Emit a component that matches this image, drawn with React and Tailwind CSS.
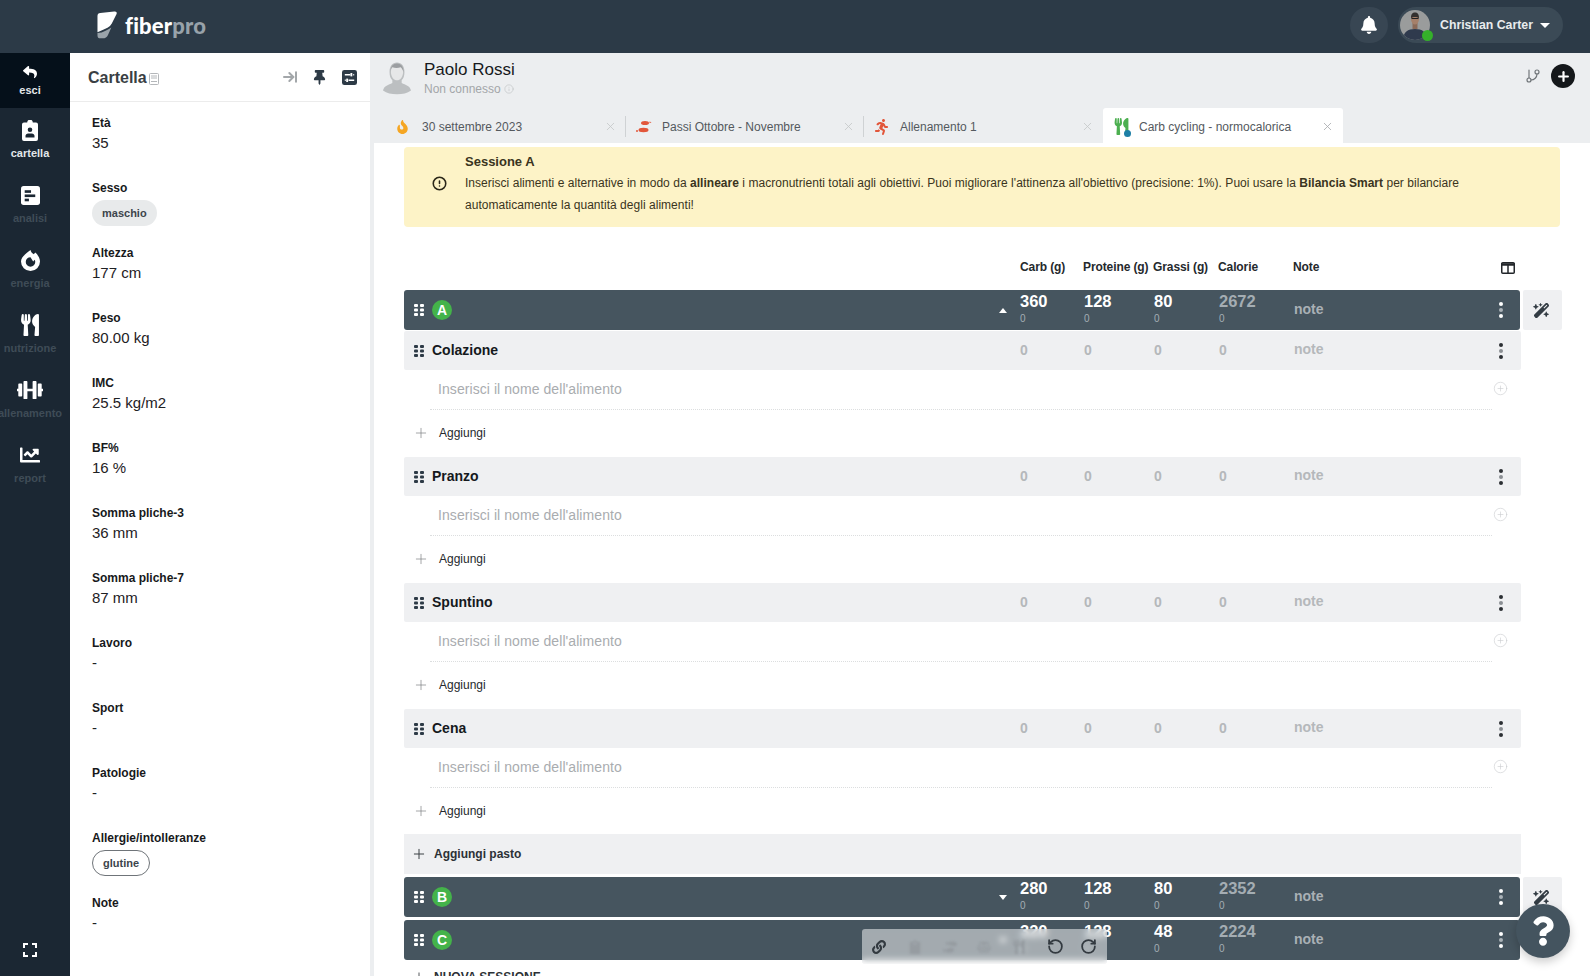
import React from 'react';
import { ArrowRightToLine, GitBranch, Info, Plus, RotateCcw, RotateCw, X, AlertCircle, PlusCircle } from 'lucide-react';
import { FaReply, FaUtensils, FaDumbbell, FaChartLine, FaThumbtack, FaBell, FaLink, FaQuestion, FaRunning, FaFire, FaShoePrints, FaClipboard, FaBalanceScale } from 'react-icons/fa';
import { FaWandMagicSparkles } from 'react-icons/fa6';

const fields = [
  ['Età', '35'],
  ['Sesso', null, 'maschio'],
  ['Altezza', '177 cm'],
  ['Peso', '80.00 kg'],
  ['IMC', '25.5 kg/m2'],
  ['BF%', '16 %'],
  ['Somma pliche-3', '36 mm'],
  ['Somma pliche-7', '87 mm'],
  ['Lavoro', '-'],
  ['Sport', '-'],
  ['Patologie', '-'],
  ['Allergie/intolleranze', null, 'glutine'],
  ['Note', '-'],
];

function Grip({ className }) {
  return (
    <svg viewBox="0 0 10 12" className={className} fill="currentColor">
      <rect x="0" y="0" width="4" height="3" rx="1" /><rect x="6" y="0" width="4" height="3" rx="1" />
      <rect x="0" y="4.5" width="4" height="3" rx="1" /><rect x="6" y="4.5" width="4" height="3" rx="1" />
      <rect x="0" y="9" width="4" height="3" rx="1" /><rect x="6" y="9" width="4" height="3" rx="1" />
    </svg>
  );
}

function Kebab({ dark }) {
  return (
    <div className={`flex flex-col items-center gap-[2px] ${dark ? 'text-white' : 'text-[#2b2f33]'}`}>
      <span className="w-[4px] h-[4px] rounded-full bg-current" />
      <span className={`w-[4px] h-[4px] rounded-full ${dark ? 'bg-[#aab2b8]' : 'bg-[#8b8f94]'}`} />
      <span className="w-[4px] h-[4px] rounded-full bg-current" />
    </div>
  );
}

function Logo() {
  return (
    <svg viewBox="0 0 22 29" className="w-[21px] h-[28px]">
      <path d="M0.500 5 Q0.500 2 3.500 1.800 L18 0.300 Q21.500 0 20.500 3 L15.500 13 Q14 16 11 17.500 Q6 20 0.500 22 Z" fill="#fff" />
      <path d="M0.500 23 Q5 23 9 20.500 Q13 18.500 15 17 L11.500 25 Q10 28.500 6 28.500 L3.500 28.500 Q0.500 28.500 0.500 25.500 Z" fill="#9aa3aa" />
    </svg>
  );
}

function ClipboardUser() {
  return (
    <svg viewBox="0 0 16 21" className="w-[16px] h-[21px]">
      <path fillRule="evenodd" fill="#fff" d="M2 2.5h3.2a2.8 2.8 0 0 1 5.6 0H14a2 2 0 0 1 2 2V19a2 2 0 0 1-2 2H2a2 2 0 0 1-2-2V4.500a2 2 0 0 1 2-2Z M8 7.500a2.300 2.300 0 1 0 0 4.600a2.300 2.300 0 0 0 0-4.600Z M3.500 17.500h9v-1.800c0-1.300-1.200-2.300-2.600-2.300H6.100c-1.400 0-2.600 1-2.600 2.300Z" />
    </svg>
  );
}

function BarsSquare() {
  return (
    <svg viewBox="0 0 18 18" className="w-[19px] h-[19px]">
      <rect width="18" height="18" rx="2.500" fill="#fff" />
      <rect x="3.500" y="4" width="6" height="2.500" fill="#1b2733" />
      <rect x="3.500" y="8" width="10" height="2.500" fill="#1b2733" />
      <rect x="3.500" y="12" width="4" height="2.500" fill="#1b2733" />
    </svg>
  );
}

function FlameRing() {
  return (
    <svg viewBox="0 0 20 22" className="w-[19px] h-[21px]">
      <path fillRule="evenodd" fill="#fff" d="M10 0c.5 2.500 2 3.500 3.500 4.500l1.500-1.800C17.800 5 20 8.500 20 12a10 10 0 0 1-20 0C0 7.500 4.500 4.500 10 0Z M10 7.500a5 5 0 1 0 5 5c0-.8-.2-1.600-.6-2.300L12.800 12 10 7.500Z" />
    </svg>
  );
}

function SlidersSquare() {
  return (
    <svg viewBox="0 0 16 16" className="w-[15px] h-[15px]">
      <rect width="16" height="16" rx="2.500" fill="#2d3a46" />
      <path d="M3 5h6M12 5h1M3 11h1M7 11h6" stroke="#fff" strokeWidth="1.500" />
      <rect x="9" y="3.200" width="2" height="3.600" fill="#fff" />
      <rect x="4.500" y="9.200" width="2" height="3.600" fill="#fff" />
    </svg>
  );
}

function Footprints() {
  return (
    <svg viewBox="0 0 16 14" className="w-[16px] h-[14px]" fill="#e2563a">
      <ellipse cx="9" cy="3" rx="4" ry="2" />
      <path d="M13.500 1.500l2 .8-2 .9z" />
      <ellipse cx="7.500" cy="10" rx="5" ry="2.200" />
      <circle cx="1" cy="11" r="1" />
    </svg>
  );
}

function Portrait() {
  return (
    <svg viewBox="0 0 30 30" className="w-[30px] h-[30px] rounded-full">
      <rect width="30" height="30" fill="#9a9c9c" />
      <path d="M3 30c0-8 5-11 12-11s12 3 12 11Z" fill="#2f3a4d" />
      <rect x="12.500" y="13" width="5" height="6" fill="#8a6a58" />
      <ellipse cx="15" cy="9" rx="4" ry="5.500" fill="#a5806a" />
      <path d="M11 8c0-4 1.500-5.500 4-5.500s4 1.500 4 5.500c-2-1.500-6-1.500-8 0Z" fill="#33302e" />
      <rect x="11.500" y="8" width="7" height="1" fill="#222" />
    </svg>
  );
}

function Client() {
  return (
    <svg viewBox="0 0 30 36" className="w-[28px] h-[35px]">
      <path d="M0 32c1-5 6-6 10-8v-3c-2-2-3-5-3-9 0-6 3-10 8-10s8 4 8 10c0 4-1 7-3 9v3c4 2 9 3 10 8-4 3-9 4-15 4s-11-1-15-4Z" fill="#bcbfc1" />
      <path d="M8.500 12c0-5 2.500-8 6.500-8s6.500 3 6.500 8c0 5-3 9-6.500 9s-6.500-4-6.500-9Z" fill="#e6e7e8" />
      <path d="M8 12c0-6 3-9 7-9s7 3 7 9c-1-3-2-4-3-5-3 1-6 1-9 0-1 1-2 2-2 5Z" fill="#9b9ea1" />
    </svg>
  );
}

function NavItem({ icon, label, height, bright, dark, pad, gap }) {
  return (
    <div className={`w-[70px] pr-[10px] ${height} ${pad} flex flex-col items-center ${dark ? 'bg-[#05101a]' : ''}`}>
      <div className="h-[24px] flex items-center justify-center text-white shrink-0">{icon}</div>
      <span className={`${gap} text-[11px] leading-[14px] font-bold whitespace-nowrap ${bright ? 'text-[#e3e7ea]' : 'text-[#3f4c57]'}`}>{label}</span>
    </div>
  );
}

function Tab({ icon, label, active, divider, w }) {
  return (
    <div className={`relative h-[35px] shrink-0 flex items-center pt-[2px] ${w} ${active ? 'bg-white rounded-t-[3px]' : ''}`}>
      <div className="w-[36px] flex justify-center shrink-0">{icon}</div>
      <span className="text-[12px] text-[#54595e] whitespace-nowrap">{label}</span>
      <X className={`absolute right-[9px] top-[12px] w-[13px] h-[13px] ${active ? 'text-[#a6a9ac]' : 'text-[#c4c7c9]'}`} strokeWidth={1.500} />
      {divider && <span className="absolute right-0 top-[8px] h-[21px] w-px bg-[#cfd2d4]" />}
    </div>
  );
}

function Cols({ values, dark }) {
  const main = dark ? 'text-white' : 'text-[#b5b8bb]';
  const cal = dark ? 'text-[#a4adb3]' : 'text-[#b5b8bb]';
  const widths = ['w-[64px]', 'w-[70px]', 'w-[65px]', 'w-[75px]'];
  return (
    <>
      {values.map((v, i) => (
        <div key={i} className={`${widths[i]} shrink-0 ${dark ? 'pb-[3px]' : 'pb-[2px]'}`}>
          <div className={`${dark ? 'text-[16.500px] leading-[18px]' : 'text-[14px] leading-[18px]'} font-bold ${i === 3 ? cal : main}`}>{v}</div>
          {dark && <div className="text-[10px] leading-[12px] mt-[3px] text-[#a4adb3]">0</div>}
        </div>
      ))}
      <div className="w-[186px] shrink-0 text-[14px] font-bold pb-[2px]">
        <span className={dark ? 'text-[#a9b0b5]' : 'text-[#b5b8bb]'}>note</span>
      </div>
      <div className={`flex justify-center shrink-0 ${dark ? 'w-[40px] pl-[2px]' : 'w-[41px]'}`}><Kebab dark={dark} /></div>
    </>
  );
}

function SessionRow({ letter, values, open, wand }) {
  return (
    <div className="flex items-start">
      <div className="w-[1116px] h-[40px] bg-[#46555f] rounded-[3px] flex items-center shrink-0">
        <Grip className="w-[10px] h-[12px] ml-[10px] text-white" />
        <span className="ml-[8px] w-[20px] h-[20px] rounded-full bg-[#44b34a] text-white text-[14px] font-bold flex items-center justify-center">{letter}</span>
        <div className="flex-1 flex justify-end pr-[13px]">
          <svg viewBox="0 0 8 5" className={`w-[8px] h-[5px] text-white ${open ? '' : 'rotate-180'}`} fill="currentColor"><path d="M4 0l4 5H0z" /></svg>
        </div>
        <Cols values={values} dark />
      </div>
      {wand && (
        <div className="ml-[3px] w-[39px] h-[40px] bg-[#eff0f2] rounded-[2px] flex items-center justify-center text-[#333c44] pr-[2px]">
          <FaWandMagicSparkles className="w-[17px] h-[17px]" />
        </div>
      )}
    </div>
  );
}

function Meal({ name }) {
  return (
    <div className="w-[1117px]">
      <div className="h-[39px] bg-[#eff0f2] rounded-[2px] flex items-center">
        <Grip className="w-[10px] h-[12px] ml-[10px] text-[#2d3a46]" />
        <span className="ml-[8px] flex-1 text-[14px] font-bold text-[#15191d]">{name}</span>
        <Cols values={[0, 0, 0, 0]} />
      </div>
      <div className="h-[40px] ml-[26px] flex items-stretch">
        <div className="flex-1 border-b border-dotted border-[#dcdedf] flex items-center pl-[8px]">
          <span className="text-[14px] tracking-[0.07px] text-[#a9acaf]">Inserisci il nome dell'alimento</span>
        </div>
        <div className="w-[17px] mr-[12px] pb-[3px] flex items-center justify-center">
          <PlusCircle className="w-[15px] h-[15px] text-[#ccced0]" strokeWidth={1} />
        </div>
      </div>
      <div className="h-[47px] flex items-center pb-[2px]">
        <Plus className="w-[16px] h-[16px] ml-[9px] text-[#75797d]" strokeWidth={1} />
        <span className="ml-[10px] text-[12px] text-[#25292d]">Aggiungi</span>
      </div>
    </div>
  );
}

export default function App() {
  return (
    <div className="w-[1596px] h-[976px] overflow-hidden relative bg-white font-['Liberation_Sans',Arial,sans-serif]">
      {/* top bar */}
      <div className="w-[1590px] h-[53px] bg-[#2c3a47] flex items-center pb-[3px]">
        <div className="ml-[97px] flex items-center gap-[7px]">
          <Logo />
          <span className="font-['Lato',sans-serif] font-black text-[22px] tracking-[0.2px] text-white">fiber<span className="text-[#98a2aa]">pro</span></span>
        </div>
        <div className="ml-auto mr-[27px] flex items-center gap-[10px]">
          <div className="w-[38px] h-[36px] rounded-full bg-[#384653] flex items-center justify-center">
            <FaBell className="w-[18px] h-[18px] text-white" />
          </div>
          <div className="relative w-[165px] h-[36px] rounded-full bg-[#3b4a56] flex items-center pl-[2px]">
            <Portrait />
            <span className="absolute left-[24px] top-[23px] w-[11px] h-[11px] rounded-full bg-[#35b02a]" />
            <span className="ml-[10px] text-[12.300px] font-bold text-[#e9ecee] whitespace-nowrap">Christian Carter</span>
            <svg viewBox="0 0 10 5" className="ml-[7px] w-[10px] h-[5px]" fill="#fff"><path d="M0 0h10L5 5z" /></svg>
          </div>
        </div>
      </div>

      <div className="flex h-[923px]">
        {/* icon sidebar */}
        <div className="w-[70px] shrink-0 bg-[#1b2733] flex flex-col overflow-hidden">
          <NavItem dark bright height="h-[55px]" pad="pt-[7px]" gap="-mt-[1px]" label="esci" icon={<FaReply className="w-[14px] h-[14px]" />} />
          <NavItem bright height="h-[65px]" pad="pt-[10px]" gap="mt-[4px]" label="cartella" icon={<ClipboardUser />} />
          <NavItem height="h-[65px]" pad="pt-[10px]" gap="mt-[4px]" label="analisi" icon={<BarsSquare />} />
          <NavItem height="h-[65px]" pad="pt-[10px]" gap="mt-[4px]" label="energia" icon={<FlameRing />} />
          <NavItem height="h-[65px]" pad="pt-[10px]" gap="mt-[4px]" label="nutrizione" icon={<FaUtensils className="w-[20px] h-[22px]" />} />
          <NavItem height="h-[65px]" pad="pt-[10px]" gap="mt-[4px]" label="allenamento" icon={<FaDumbbell className="w-[26px] h-[22px]" />} />
          <NavItem height="h-[65px]" pad="pt-[10px]" gap="mt-[4px]" label="report" icon={<FaChartLine className="w-[22px] h-[20px]" />} />
          <div className="mt-auto mb-[19px] pr-[10px] flex justify-center">
            <svg viewBox="0 0 14 14" className="w-[14px] h-[14px]" fill="none" stroke="#fff" strokeWidth="2"><path d="M1 5V1h4M9 1h4v4M13 9v4H9M5 13H1V9" /></svg>
          </div>
        </div>

        {/* cartella panel */}
        <div className="w-[300px] shrink-0 flex flex-col">
          <div className="h-[49px] border-b border-[#ececec] flex items-center pl-[18px] pr-[13px] shrink-0">
            <span className="text-[16px] font-bold text-[#3a3f44] pt-[2px]">Cartella</span>
            <svg viewBox="0 0 10 12" className="ml-[2px] mt-[4px] w-[10px] h-[12px]" fill="none" stroke="#b4b7ba" strokeWidth="1"><rect x="0.500" y="0.500" width="9" height="11" rx="1" /><path d="M2 3h6M2 5h6M2 8.500h6" /></svg>
            <div className="ml-auto flex items-center">
              <ArrowRightToLine className="w-[16px] h-[16px] text-[#a3a7aa]" strokeWidth={3} />
              <FaThumbtack className="ml-[14px] w-[15px] h-[15px] text-[#2d3a46]" />
              <span className="ml-[15px]"><SlidersSquare /></span>
            </div>
          </div>
          <div className="pt-[12px] pl-[22px]">
            {fields.map(([label, value, chip]) => (
              <div key={label} className="h-[65px]">
                <div className="text-[12px] leading-[18px] font-bold text-[#17191b]">{label}</div>
                {value && <div className="text-[15px] leading-[20px] mt-[1px] text-[#1e2124]">{value}</div>}
                {chip === 'maschio' && <span className="inline-block mt-[3px] h-[26px] px-[10px] leading-[26px] rounded-full bg-[#e8eaeb] text-[11px] font-bold text-[#3d454c]">{chip}</span>}
                {chip === 'glutine' && <span className="inline-block mt-[3px] h-[26px] px-[10px] leading-[24px] rounded-full border border-[#6f7479] text-[11px] font-bold text-[#3d454c]">{chip}</span>}
              </div>
            ))}
          </div>
        </div>

        {/* main */}
        <div className="w-[1220px] shrink-0 flex flex-col">
          <div className="h-[90px] bg-[#eceef0] shrink-0 relative">
            <div className="h-[55px] flex items-start pl-[13px] pt-[7px]">
              <Client />
              <div className="ml-[13px]">
                <div className="text-[17px] leading-[18px] mt-[1px] text-[#16191c]">Paolo Rossi</div>
                <div className="mt-[3px] flex items-center gap-[3px] text-[12px] leading-[14px] text-[#a3a6a9]">
                  Non connesso <Info className="w-[10px] h-[10px] text-[#bfc2c4]" strokeWidth={1.500} />
                </div>
              </div>
              <div className="ml-auto mr-[15px] mt-[4px] flex items-center gap-[10px]">
                <GitBranch className="w-[16px] h-[16px] text-[#6f7478]" strokeWidth={1.750} />
                <span className="w-[24px] h-[24px] rounded-full bg-[#15181b] flex items-center justify-center">
                  <Plus className="w-[15px] h-[15px] text-white" strokeWidth={3.500} />
                </span>
              </div>
            </div>
            <div className="flex pl-[16px]">
              <Tab w="w-[240px]" divider label="30 settembre 2023" icon={<FaFire className="w-[13px] h-[14px] mr-[4px] text-[#f5a623]" />} />
              <Tab w="w-[238px]" divider label="Passi Ottobre - Novembre" icon={<Footprints />} />
              <Tab w="w-[239px]" label="Allenamento 1" icon={<FaRunning className="w-[15px] h-[16px] mr-[2px] text-[#e2563a]" />} />
              <Tab w="w-[240px]" active label="Carb cycling - normocalorica" icon={
                <span className="relative"><FaUtensils className="w-[15px] h-[17px] text-[#4caf50]" /><span className="absolute -right-[2px] -bottom-[2px] w-[7px] h-[7px] rounded-full bg-[#1d7fa6]" /></span>
              } />
            </div>
          </div>

          <div className="flex-1 pl-[34px] border-l-4 border-[#eceef0] relative">
            <div className="mt-[4px] ml-[-4px] w-[1156px] h-[80px] bg-[#fdf3c7] rounded-[4px] flex items-start text-[#3a3420]">
              <div className="w-[61px] pt-[29px] flex justify-center shrink-0 pl-[9px]">
                <AlertCircle className="w-[15px] h-[15px] text-[#2b2718]" strokeWidth={2.500} />
              </div>
              <div className="pt-[7px]">
                <div className="text-[13px] leading-[16px] font-bold">Sessione A</div>
                <p className="mt-[3px] text-[12px] leading-[21.500px] w-[1030px] tracking-[0.035px]">
                  Inserisci alimenti e alternative in modo da <b>allineare</b> i macronutrienti totali agli obiettivi. Puoi migliorare l'attinenza all'obiettivo (precisione: 1%). Puoi usare la <b>Bilancia Smart</b> per bilanciare automaticamente la quantità degli alimenti!
                </p>
              </div>
            </div>

            <div className="ml-[-4px] mt-[31px] h-[32px] w-[1116px] flex items-start text-[12px] font-bold tracking-[-0.1px] text-[#25292d]">
              <div className="w-[616px] shrink-0" />
              <div className="w-[63px] shrink-0">Carb (g)</div>
              <div className="w-[70px] shrink-0 whitespace-nowrap">Proteine (g)</div>
              <div className="w-[65px] shrink-0 whitespace-nowrap">Grassi (g)</div>
              <div className="w-[75px] shrink-0">Calorie</div>
              <div>Note</div>
              <div className="ml-auto mr-[5px] mt-[4px]">
                <svg viewBox="0 0 14 12" className="w-[14px] h-[12px]" fill="none" stroke="#22262a"><rect x="0.750" y="0.750" width="12.500" height="10.500" rx="1" strokeWidth="1.500" /><path d="M0 2.500h14" strokeWidth="2.500" /><path d="M7 2v9" strokeWidth="1.500" /></svg>
              </div>
            </div>

            <div className="ml-[-4px] flex flex-col">
              <SessionRow letter="A" values={[360, 128, 80, 2672]} open wand />
              <div className="mt-[1px] flex flex-col">
                {['Colazione', 'Pranzo', 'Spuntino', 'Cena'].map((m) => <Meal key={m} name={m} />)}
              </div>
              <div className="w-[1117px] h-[40px] bg-[#eff0f2] flex items-center -mt-[1px]">
                <Plus className="w-[16px] h-[16px] ml-[7px] text-[#3b4045]" strokeWidth={1.500} />
                <span className="ml-[7px] text-[12px] font-bold text-[#2c3136]">Aggiungi pasto</span>
              </div>
              <div className="mt-[3px]"><SessionRow letter="B" values={[280, 128, 80, 2352]} wand /></div>
              <div className="mt-[3px]"><SessionRow letter="C" values={[320, 128, 48, 2224]} /></div>
              <div className="mt-[9px] flex items-center h-[16px]">
                <Plus className="w-[14px] h-[14px] ml-[8px] text-[#3b4045]" strokeWidth={1.500} />
                <span className="ml-[8px] text-[12px] font-bold text-[#2c3136]">NUOVA SESSIONE</span>
              </div>
            </div>
          </div>
        </div>
      </div>

      {/* floating toolbar */}
      <div className="absolute left-[862px] top-[929px] w-[245px] h-[35px] rounded-[3px] bg-white/50 backdrop-blur-[3px] flex items-center text-[#333a40]">
        <FaLink className="ml-[10px] w-[14px] h-[14px]" />
        <div className="ml-[22px] flex items-center gap-[20.500px] text-[#969ca1] blur-[1px]">
          <FaClipboard className="w-[14px] h-[14px]" />
          <FaShoePrints className="w-[14px] h-[14px]" />
          <FaBalanceScale className="w-[14px] h-[14px]" />
          <FaUtensils className="w-[14px] h-[14px]" />
        </div>
        <div className="ml-auto mr-[10px] flex items-center gap-[16px]">
          <RotateCcw className="w-[17px] h-[17px]" strokeWidth={2.500} />
          <RotateCw className="w-[17px] h-[17px]" strokeWidth={2.500} />
        </div>
      </div>

      {/* help */}
      <div className="absolute left-[1516px] top-[904px] w-[54px] h-[54px] rounded-full bg-[#44545f] shadow-[0_4px_10px_rgba(0,0,0,0.2)] flex items-center justify-center">
        <FaQuestion className="w-[22px] h-[32px] text-white" />
      </div>
    </div>
  );
}
